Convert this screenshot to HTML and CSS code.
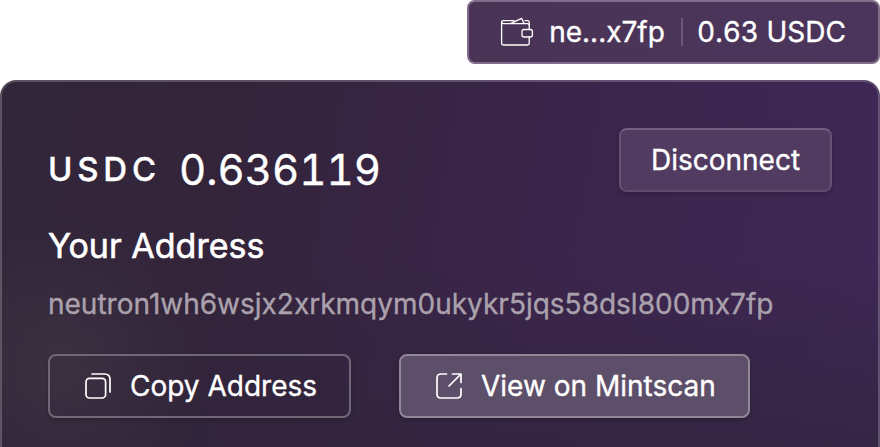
FILE: index.html
```html
<!DOCTYPE html>
<html lang="en">
<head>
<meta charset="utf-8">
<title>Wallet</title>
<link rel="stylesheet" href="styles.css">
</head>
<body>
<header class="topbar">
  <button class="account">
    <svg class="wallet-icon" width="34" height="30" viewBox="0 0 34 30" fill="none" stroke="currentColor" stroke-width="1.3" stroke-linejoin="round" stroke-linecap="round">
      <path d="M29.2 12.5V8.4Q29.2 6.6 27.4 6.6H3.4Q1.6 6.6 1.6 4.8V26.2Q1.6 28 3.4 28H27.4Q29.2 28 29.2 26.2V20"/>
      <path d="M1.6 5Q1.6 3.6 3.4 3.6H14M25 3.6H27.5Q29.2 3.6 29.2 5.2V8M11 6.4L21.6 1.4L24 6.4"/>
      <rect x="22" y="12.5" width="10.4" height="7.5" rx="2"/>
    </svg>
    <span class="account-name">ne...x7fp</span>
    <span class="divider"></span>
    <span class="account-balance">0.63 USDC</span>
  </button>
</header>
<main class="panel">
  <div class="summary">
    <div class="balance"><span class="denom">USDC</span><span class="amount">0.636119</span></div>
    <button class="button disconnect">Disconnect</button>
  </div>
  <h2 class="title">Your Address</h2>
  <p class="address">neutron1wh6wsjx2xrkmqym0ukykr5jqs58dsl800mx7fp</p>
  <div class="actions">
    <button class="button copy">
      <svg width="28" height="28" viewBox="0 0 28 28" fill="none" stroke="currentColor" stroke-width="1.7" stroke-linecap="round">
        <rect x="2" y="6.4" width="19.6" height="19.6" rx="3.5"/>
        <path d="M8 2H20.5Q26 2 26 7.5V20"/>
      </svg>
      <span>Copy Address</span>
    </button>
    <button class="button view">
      <svg width="28" height="28" viewBox="0 0 28 28" fill="none" stroke="currentColor" stroke-width="1.7" stroke-linecap="round" stroke-linejoin="round">
        <path d="M11.5 2H6Q2 2 2 6V22Q2 26 6 26H22Q26 26 26 22V16.5M17.5 2H26V10.5M26 2L14 14"/>
      </svg>
      <span>View on Mintscan</span>
    </button>
  </div>
</main>
</body>
</html>
```
FILE: styles.css
```css
* { box-sizing: border-box; }
body {
  margin: 0;
  height: 447px;
  overflow: hidden;
  background: #fff;
  color: #fff;
  font-family: Inter, sans-serif;
  -webkit-text-stroke: .35px currentColor;
}
button { margin: 0; font: inherit; color: inherit; }
svg { display: block; flex: none; }
.topbar { display: flex; justify-content: flex-end; height: 80px; }
.account {
  display: flex;
  align-items: center;
  width: 413px;
  height: 64px;
  padding: 0 0 0 31px;
  border: 2px solid #816d8b;
  border-radius: 8px;
  background: linear-gradient(90deg, #493456, #4c355c);
  font-size: 28px;
  line-height: 34px;
  white-space: nowrap;
}
.account-name { width: 116px; margin-left: 15px; }
.account-balance { font-variant-numeric: tabular-nums; }
.divider { width: 2px; height: 28px; margin: 0 14px 0 16px; background: #6d587a; }
.panel {
  height: 367px;
  padding: 46px 46px 0;
  border: 2px solid rgba(255, 255, 255, .2);
  border-bottom: 0;
  border-radius: 16px 16px 0 0;
  background:
    radial-gradient(circle at 60px 290px, rgba(75, 65, 75, .4), transparent 150px),
    linear-gradient(180deg, transparent 50%, rgba(47, 36, 58, .6) 100%),
    linear-gradient(100deg, #32263a 0%, #33243a 25%, #3b254b 60%, #3f2856 100%);
  background-origin: border-box;
}
.summary { display: flex; justify-content: space-between; height: 88px; }
.balance { display: flex; align-items: center; height: 82px; }
.denom { width: 131px; font-size: 33px; font-weight: 500; letter-spacing: 4.8px; }
.amount { font-size: 42px; line-height: 51px; font-variant-numeric: tabular-nums; }
.button {
  display: flex;
  align-items: center;
  height: 64px;
  padding: 0;
  border: 2px solid rgba(255, 255, 255, .3);
  border-radius: 8px;
  background: transparent;
  background-clip: padding-box;
  box-shadow: 0 2px 4px rgba(0, 0, 0, .2);
  font-size: 28px;
  line-height: 34px;
  white-space: nowrap;
}
.disconnect {
  justify-content: center;
  width: 213px;
  border-color: #695477;
  border-top-color: #745f80;
  border-bottom-color: #604b6e;
  background-color: #513b60;
}
.title { margin: 9px 0 0; font-size: 34px; font-weight: 400; line-height: 42px; -webkit-text-stroke-width: .6px; }
.address { margin: 20px 0 0; color: #aaa1ad; font-size: 28px; line-height: 34px; }
.actions { display: flex; gap: 48px; margin-top: 33px; }
.copy, .view { gap: 18px; padding-left: 34px; }
.copy { width: 303px; border-color: #726779; }
.view { width: 351px; border-color: #918799; background: #5d4e69; }
```
